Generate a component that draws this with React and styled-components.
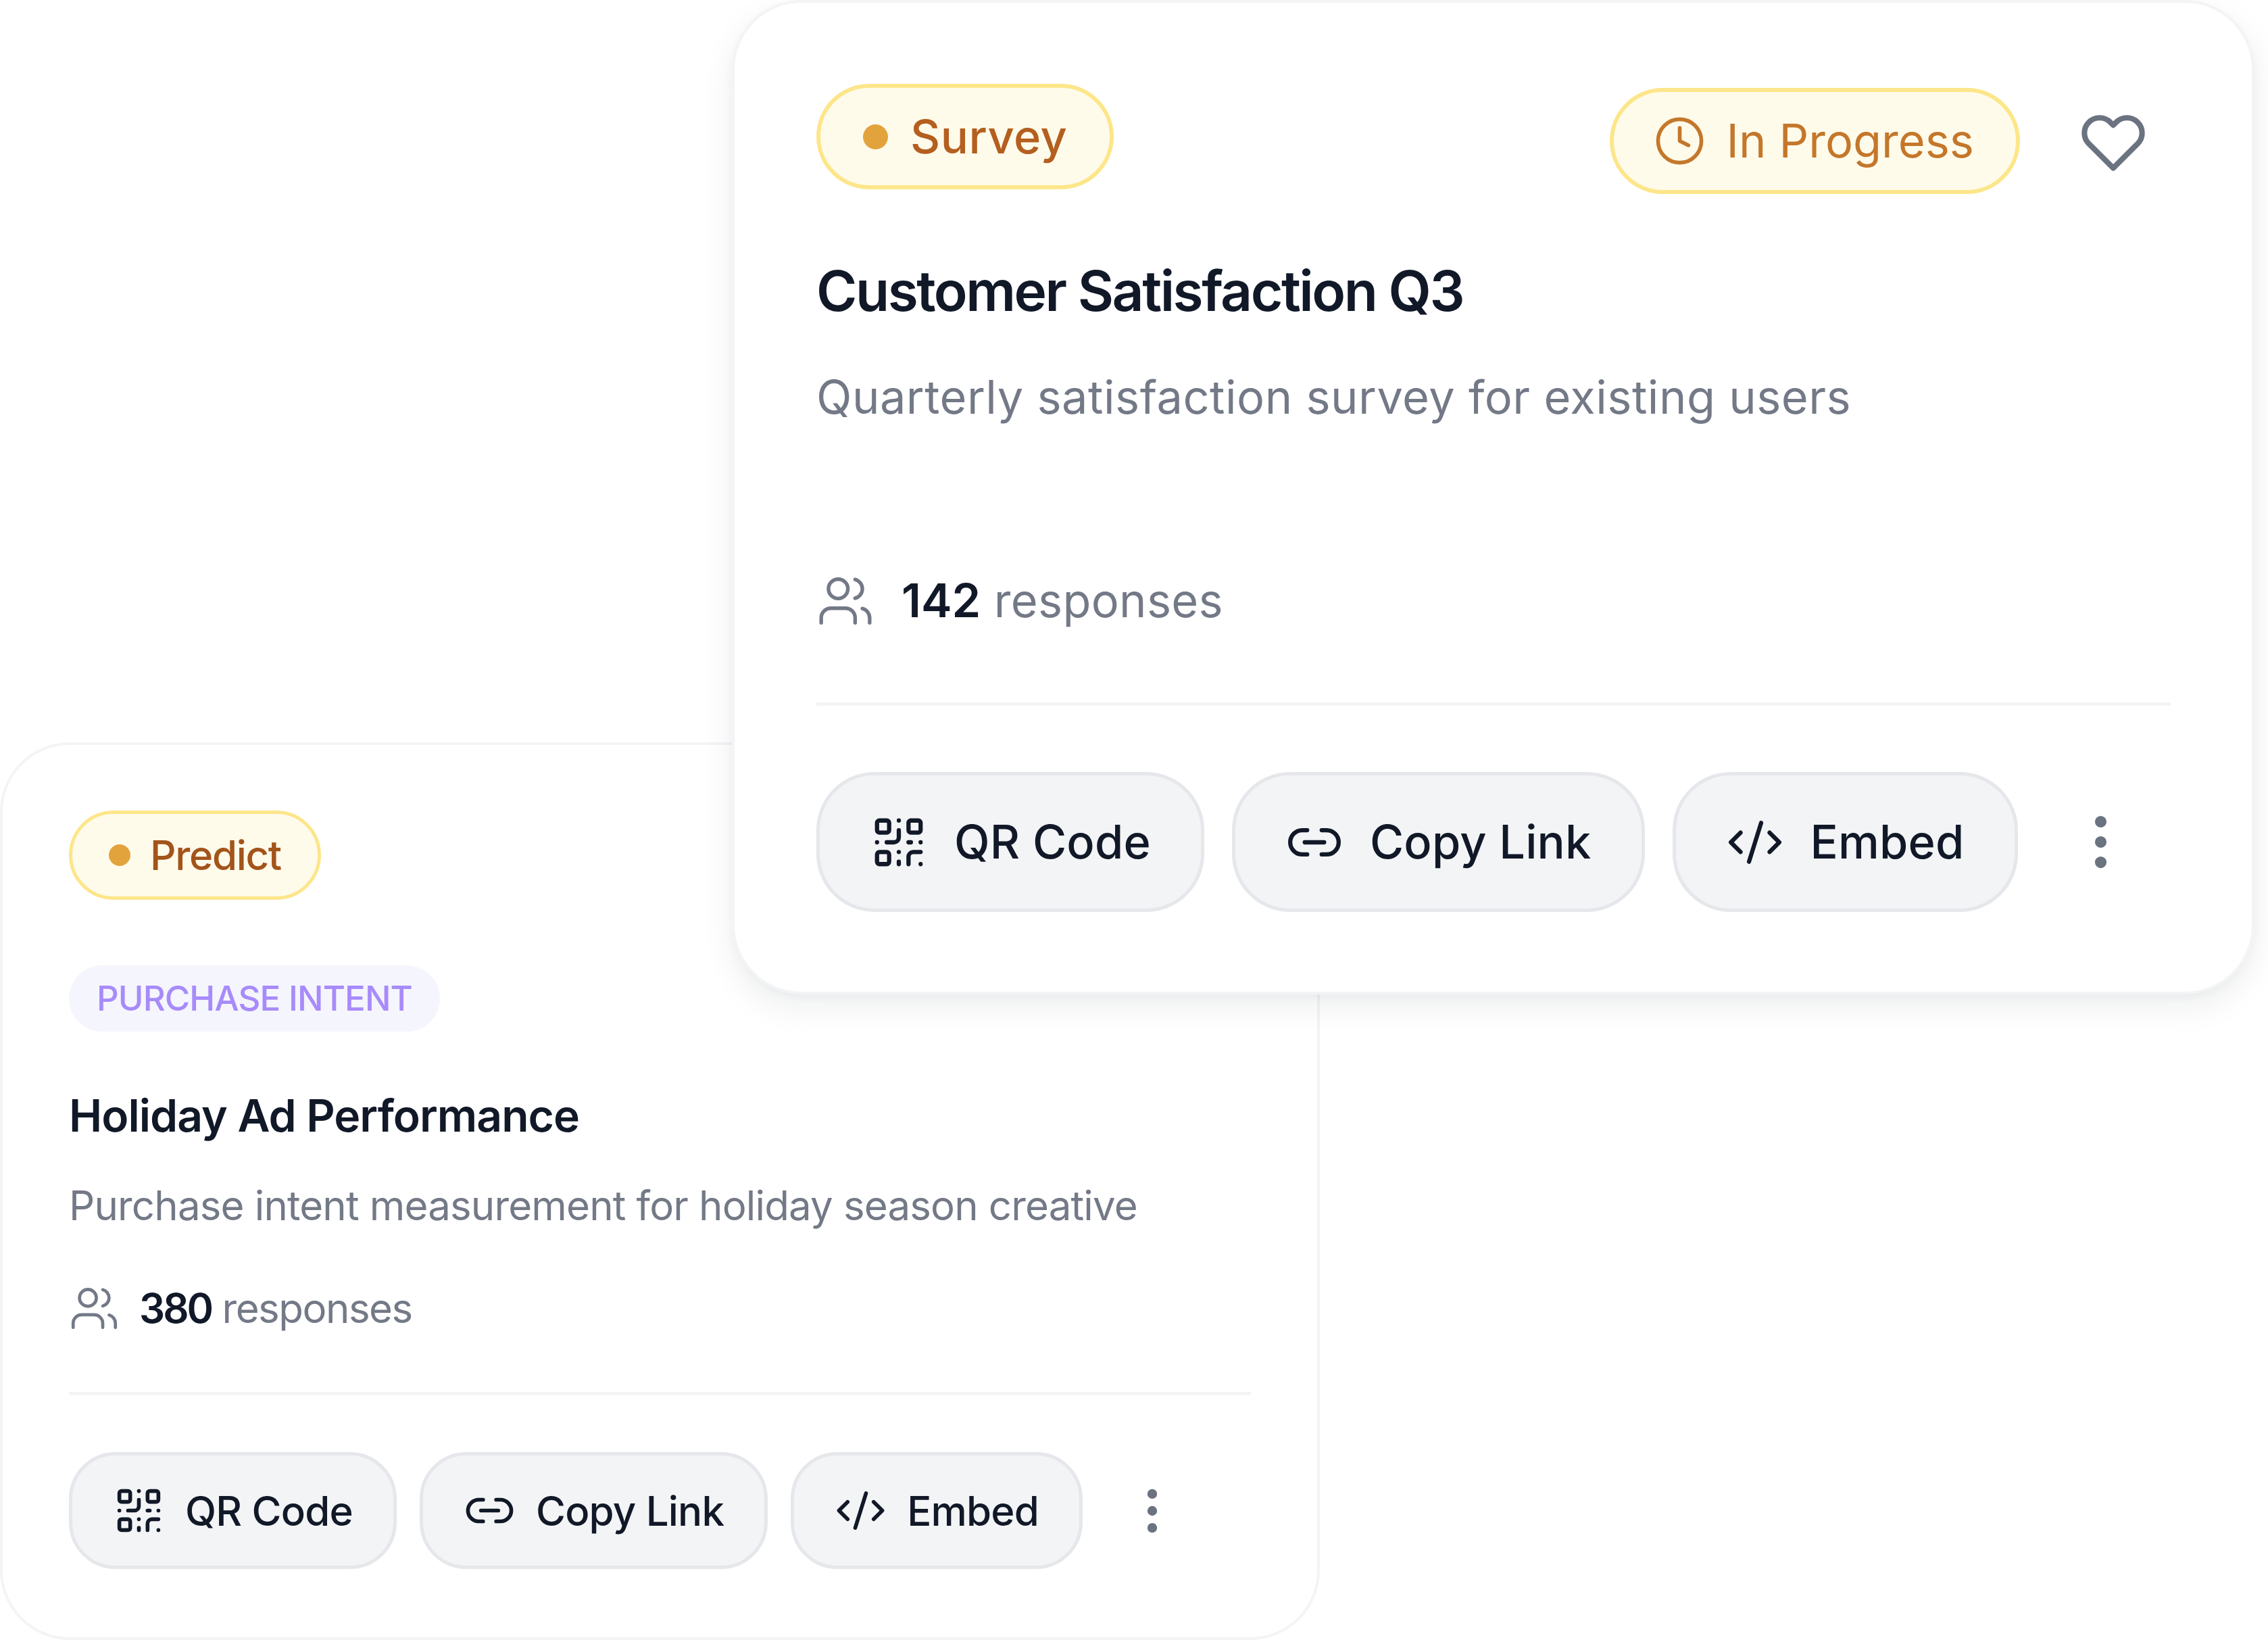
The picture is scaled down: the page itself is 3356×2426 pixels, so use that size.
import React from "react";
import styled, { createGlobalStyle, css } from "styled-components";
import { Clock, Users, QrCode, Link2, CodeXml, MoreVertical } from "lucide-react";

const GlobalStyle = createGlobalStyle`
  html, body {
    margin: 0;
    padding: 0;
    background: #ffffff;
  }
  body {
    font-family: "Inter", "Liberation Sans", sans-serif;
  }
`;

const sizes = {
  large: {
    pad: "120px 120px 116px",
    radius: 103,
    pillBorder: 6,
    pillHeight: 156,
    pillPad: 63,
    pillGap: 33,
    pillFont: 68.5,
    pillTrack: 0.5,
    dot: 37,
    title: 82,
    titleLine: 107,
    titleTrack: -2.5,
    text: 68.5,
    textLine: 103,
    textTrack: 0.5,
    countTrack: 0.3,
    strongTrack: 0,
    users: 86,
    usersGap: 40,
    btnHeight: 207,
    btnPad: 79,
    btnGap: 41,
    btnRadius: 86,
    btnIcon: 86,
    btnIconGap: 39,
    btnTrack: 0.2,
    more: 103,
    morePad: 30,
    ruleTop: 99,
    ruleBottom: 98,
  },
  small: {
    pad: "97px 98px 99px",
    radius: 103,
    pillBorder: 5,
    pillHeight: 132,
    pillPad: 54,
    pillGap: 29,
    pillFont: 60,
    pillTrack: -1.3,
    dot: 32,
    title: 66,
    titleLine: 92,
    titleTrack: -1,
    text: 60,
    textLine: 90,
    textTrack: -0.85,
    countTrack: -1.5,
    strongTrack: -3,
    users: 75,
    usersGap: 29,
    btnHeight: 173,
    btnPad: 65,
    btnGap: 34,
    btnRadius: 69,
    btnIcon: 77,
    btnIconGap: 30,
    btnTrack: -0.8,
    more: 86,
    morePad: 26,
    ruleTop: 79,
    ruleBottom: 84,
  },
};

const Stage = styled.div`
  display: grid;
  width: 3356px;
  height: 2426px;
  overflow: hidden;
  background: #ffffff;
`;

const Card = styled.article`
  grid-area: 1 / 1;
  box-sizing: border-box;
  display: flex;
  flex-direction: column;
  background: #ffffff;
  border: 4px solid #f3f4f6;
  ${({ $size }) => css`
    padding: ${sizes[$size].pad};
    border-radius: ${sizes[$size].radius}px;
  `}
`;

const FrontCard = styled(Card)`
  z-index: 2;
  width: 2253px;
  height: 1471px;
  align-self: start;
  justify-self: start;
  margin-left: 1083px;
  padding-left: 121px;
  box-shadow: 0 18px 50px rgba(17, 24, 39, 0.07), 0 6px 14px rgba(17, 24, 39, 0.03);
`;

const BackCard = styled(Card)`
  width: 1953px;
  height: 1328px;
  align-self: end;
  justify-self: start;
`;

const TopRow = styled.header`
  display: flex;
  justify-content: space-between;
  align-items: flex-start;
`;

const TopRight = styled.div`
  display: flex;
  align-items: center;
  gap: 53px;
  margin-top: 6px;
`;

const Pill = styled.span`
  box-sizing: border-box;
  display: inline-flex;
  align-items: center;
  align-self: flex-start;
  background: #fffbeb;
  border-style: solid;
  border-color: #fde68a;
  border-radius: 999px;
  font-weight: 500;
  ${({ $size }) => css`
    border-width: ${sizes[$size].pillBorder}px;
    height: ${sizes[$size].pillHeight}px;
    padding: 0 ${sizes[$size].pillPad}px;
    gap: ${sizes[$size].pillGap}px;
    font-size: ${sizes[$size].pillFont}px;
    letter-spacing: ${sizes[$size].pillTrack}px;
  `}
  color: ${({ $color }) => $color || "#b45309"};
`;

const ProgressPill = styled(Pill)`
  height: 157px;
  padding: 0 62px 0 59px;
  gap: 30px;
  font-weight: 400;
  letter-spacing: 0;
`;

const Dot = styled.i`
  display: block;
  border-radius: 50%;
  background: #e3a33c;
  ${({ $size }) => css`
    width: ${sizes[$size].dot}px;
    height: ${sizes[$size].dot}px;
  `}
`;

const IconButton = styled.button`
  display: flex;
  padding: 32px 36px 40px;
  border: 0;
  background: none;
  color: #6b7280;
`;

const Tag = styled.span`
  align-self: flex-start;
  margin-top: 97px;
  padding: 0 41px;
  height: 98px;
  line-height: 98px;
  border-radius: 999px;
  background: #f5f5fe;
  color: #a78bfa;
  font-size: 51px;
  font-weight: 500;
  text-transform: uppercase;
  letter-spacing: -0.9px;
`;

const Title = styled.h2`
  margin: ${({ $top }) => $top}px 0 0;
  color: #111827;
  font-weight: 600;
  ${({ $size }) => css`
    font-size: ${sizes[$size].title}px;
    line-height: ${sizes[$size].titleLine}px;
    letter-spacing: ${sizes[$size].titleTrack}px;
  `}
`;

const Description = styled.p`
  margin: ${({ $top }) => $top}px 0 0;
  color: #737986;
  ${({ $size }) => css`
    font-size: ${sizes[$size].text}px;
    line-height: ${sizes[$size].textLine}px;
    letter-spacing: ${sizes[$size].textTrack}px;
  `}
`;

const Responses = styled.div`
  display: flex;
  align-items: center;
  margin-top: ${({ $top }) => $top}px;
  color: #737986;
  ${({ $size }) => css`
    gap: ${sizes[$size].usersGap}px;
    font-size: ${sizes[$size].text}px;
    line-height: ${sizes[$size].textLine}px;
    letter-spacing: ${sizes[$size].countTrack}px;
    strong {
      letter-spacing: ${sizes[$size].strongTrack}px;
    }
  `}
  strong {
    color: #111827;
    font-weight: 600;
  }
`;

const Rule = styled.hr`
  flex: none;
  width: 100%;
  height: 5px;
  border: 0;
  background: #f3f4f6;
  ${({ $size }) => css`
    margin: ${sizes[$size].ruleTop}px 0 ${sizes[$size].ruleBottom}px;
  `}
`;

const Actions = styled.div`
  display: flex;
  align-items: center;
  gap: ${({ $size }) => sizes[$size].btnGap}px;
`;

const ActionButton = styled.button`
  box-sizing: border-box;
  display: inline-flex;
  align-items: center;
  background: #f3f4f6;
  border: 5px solid #e5e7eb;
  color: #111827;
  font-family: inherit;
  font-weight: 500;
  white-space: nowrap;
  ${({ $size }) => css`
    height: ${sizes[$size].btnHeight}px;
    padding: 0 ${sizes[$size].btnPad - 5}px;
    gap: ${sizes[$size].btnIconGap}px;
    border-radius: ${sizes[$size].btnRadius}px;
    font-size: ${sizes[$size].text}px;
    letter-spacing: ${sizes[$size].btnTrack}px;
  `}
`;

const MoreButton = styled.button`
  display: flex;
  border: 0;
  background: none;
  color: #6b7280;
  padding: ${({ $size }) => sizes[$size].morePad}px;
`;

const HeartIcon = () => (
  <svg width="98" height="98" viewBox="0 0 24 24" fill="none" stroke="currentColor" strokeWidth="2" strokeLinejoin="round">
    <path d="M20.84 4.61a5.5 5.5 0 0 0-7.78 0L12 5.67l-1.06-1.06a5.5 5.5 0 0 0-7.78 7.78l1.06 1.06L12 21.23l7.78-7.78 1.06-1.06a5.5 5.5 0 0 0 0-7.78z" />
  </svg>
);

const actionList = [
  { label: "QR Code", Icon: QrCode },
  { label: "Copy Link", Icon: Link2 },
  { label: "Embed", Icon: CodeXml },
];

const Footer = ({ size }) => (
  <>
    <Rule $size={size} />
    <Actions $size={size}>
      {actionList.map(({ label, Icon }) => (
        <ActionButton key={label} $size={size}>
          <Icon size={sizes[size].btnIcon} strokeWidth={1.75} />
          {label}
        </ActionButton>
      ))}
      <MoreButton $size={size} aria-label="More">
        <MoreVertical size={sizes[size].more} strokeWidth={2} />
      </MoreButton>
    </Actions>
  </>
);

export default function App() {
  return (
    <>
      <GlobalStyle />
      <Stage>
        <BackCard $size="small">
          <Pill $size="small" $color="#a3541a">
            <Dot $size="small" />
            Predict
          </Pill>
          <Tag>Purchase Intent</Tag>
          <Title $size="small" $top={78}>Holiday Ad Performance</Title>
          <Description $size="small" $top={42}>
            Purchase intent measurement for holiday season creative
          </Description>
          <Responses $size="small" $top={62}>
            <Users size={sizes.small.users} strokeWidth={1.5} />
            <span>
              <strong>380</strong> responses
            </span>
          </Responses>
          <Footer size="small" />
        </BackCard>

        <FrontCard $size="large">
          <TopRow>
            <Pill $size="large" $color="#b45f1f">
              <Dot $size="large" />
              Survey
            </Pill>
            <TopRight>
              <ProgressPill $size="large" $color="#c4772a">
                <Clock size={77} strokeWidth={1.75} />
                In Progress
              </ProgressPill>
              <IconButton aria-label="Favourite">
                <HeartIcon />
              </IconButton>
            </TopRight>
          </TopRow>
          <Title $size="large" $top={77}>Customer Satisfaction Q3</Title>
          <Description $size="large" $top={52}>
            Quarterly satisfaction survey for existing users
          </Description>
          <Responses $size="large" $top={198}>
            <Users size={sizes.large.users} strokeWidth={1.5} />
            <span>
              <strong>142</strong> responses
            </span>
          </Responses>
          <Footer size="large" />
        </FrontCard>
      </Stage>
    </>
  );
}
